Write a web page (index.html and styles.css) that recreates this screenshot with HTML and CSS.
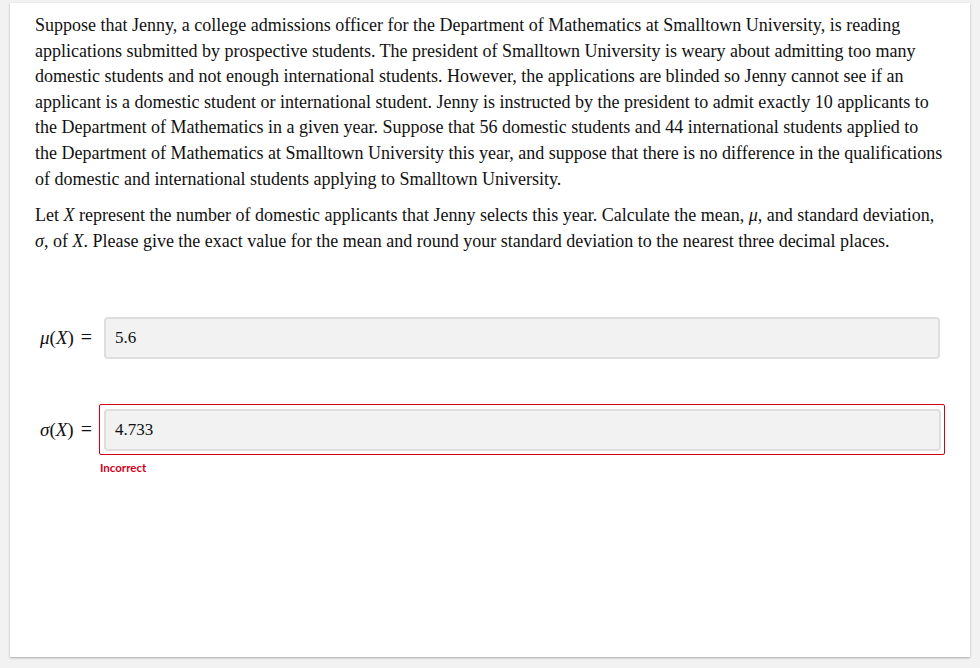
FILE: index.html
```html
<!DOCTYPE html>
<html>
<head>
<meta charset="utf-8">
<link rel="stylesheet" href="styles.css">
</head>
<body>
<div class="card">
  <p class="para">Suppose that Jenny, a college admissions officer for the Department of Mathematics at Smalltown University, is reading applications submitted by prospective students. The president of Smalltown University is weary about admitting too many domestic students and not enough international students. However, the applications are blinded so Jenny cannot see if an applicant is a domestic student or international student. Jenny is instructed by the president to admit exactly 10 applicants to the Department of Mathematics in a given year. Suppose that 56 domestic students and 44 international students applied to<br>the Department of Mathematics at Smalltown University this year, and suppose that there is no difference in the qualifications of domestic and international students applying to Smalltown University.</p>
  <p class="para">Let <i>X</i> represent the number of domestic applicants that Jenny selects this year. Calculate the mean, <i>μ</i>, and standard deviation, <i>σ</i>, of <i>X</i>. Please give the exact value for the mean and round your standard deviation to the nearest three decimal places.</p>
  <div class="answers">
    <div class="row">
      <span class="label"><i>μ</i>(<i>X</i>)<span class="eq">=</span></span>
      <div class="wrap"><div class="field">5.6</div></div>
    </div>
    <div class="row row-err">
      <span class="label"><i>σ</i>(<i>X</i>)<span class="eq">=</span></span>
      <div class="wrap-col">
        <div class="err"><div class="field">4.733</div></div>
        <div class="msg">Incorrect</div>
      </div>
    </div>
  </div>
</div>
</body>
</html>
```
FILE: styles.css
```css
html, body { margin: 0; padding: 0; }
body {
  background: #f2f2f2;
  font-family: "Liberation Serif", "Times New Roman", serif;
  color: #111;
  width: 980px;
  height: 668px;
  overflow: hidden;
}
.card {
  margin: 3px 10px 0 10px;
  height: 654px;
  background: #fff;
  box-shadow: 0 1px 2px rgba(0,0,0,0.3);
  padding: 10px 25px 0 25px;
  box-sizing: border-box;
}
.para {
  margin: 0 0 11px 0;
  font-size: 18px;
  line-height: 25.6px;
}
.answers {
  padding-top: 52px;
}
.row {
  display: flex;
  align-items: flex-start;
}
.label {
  font-size: 19px;
  width: 64px;
  height: 42px;
  padding-left: 5px;
  box-sizing: border-box;
  line-height: 42px;
  flex: none;
  white-space: nowrap;
}
.eq {
  margin-left: 7px;
  font-size: 20px;
  line-height: 1;
}
.wrap {
  flex: 1;
  padding-left: 5px;
  margin-right: 5px;
}
.field {
  height: 42px;
  box-sizing: border-box;
  background: #f2f2f2;
  border: 2px solid #dedede;
  border-radius: 4px;
  font-size: 17px;
  line-height: 38px;
  padding-left: 9px;
}
.row-err {
  margin-top: 45px;
}
.row-err .label {
  margin-top: 5px;
}
.wrap-col {
  flex: 1;
}
.err {
  border: 1px solid #d0021b;
  border-radius: 2px;
  padding: 4px 3px 3px 4px;
}
.msg {
  font-family: Lato, "Open Sans", sans-serif;
  font-weight: bold;
  font-size: 11.5px;
  color: #d0021b;
  margin-top: 6px;
  padding-left: 1px;
}
```
